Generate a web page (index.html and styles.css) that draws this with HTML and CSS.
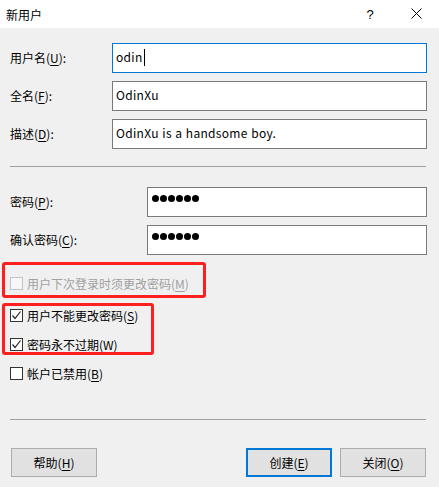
FILE: index.html
```html
<!DOCTYPE html>
<html lang="zh-CN">
<head>
  <meta charset="UTF-8" />
  <title>新用户</title>
  <link rel="stylesheet" href="styles.css">
</head>
<body>
  <div class="titlebar">
    <span class="title">新用户</span>
    <span class="tb-btn help">?</span>
    <span class="tb-btn close">
      <svg width="11" height="11" viewBox="0 0 11 11"><path d="M0.5 0.5 L10.5 10.5 M10.5 0.5 L0.5 10.5" stroke="#000" stroke-width="1" fill="none"/></svg>
    </span>
  </div>

  <div class="dialog">
    <div class="fields">
      <div class="row">
        <label class="lbl">用户名(<u>U</u>):</label>
        <div class="input focused">odin<span class="caret"></span></div>
      </div>
      <div class="row">
        <label class="lbl">全名(<u>F</u>):</label>
        <div class="input">OdinXu</div>
      </div>
      <div class="row">
        <label class="lbl">描述(<u>D</u>):</label>
        <div class="input">OdinXu is a handsome boy.</div>
      </div>
    </div>

    <div class="sep first-sep"></div>

    <div class="fields pw">
      <div class="row">
        <label class="lbl">密码(<u>P</u>):</label>
        <div class="input dots"><i></i><i></i><i></i><i></i><i></i><i></i></div>
      </div>
      <div class="row">
        <label class="lbl">确认密码(<u>C</u>):</label>
        <div class="input dots"><i></i><i></i><i></i><i></i><i></i><i></i></div>
      </div>
    </div>

    <div class="checks">
      <div class="check disabled">
        <span class="box"></span>
        <span>用户下次登录时须更改密码(<u>M</u>)</span>
      </div>
      <div class="check">
        <span class="box"><svg width="11" height="11" viewBox="0 0 11 11"><path d="M1.5 5.5 L4 8.5 L9.5 1.5" stroke="#222" stroke-width="1.2" fill="none"/></svg></span>
        <span>用户不能更改密码(<u>S</u>)</span>
      </div>
      <div class="check">
        <span class="box"><svg width="11" height="11" viewBox="0 0 11 11"><path d="M1.5 5.5 L4 8.5 L9.5 1.5" stroke="#222" stroke-width="1.2" fill="none"/></svg></span>
        <span>密码永不过期(<u>W</u>)</span>
      </div>
      <div class="check">
        <span class="box"></span>
        <span>帐户已禁用(<u>B</u>)</span>
      </div>
    </div>

    <div class="sep last-sep"></div>

    <div class="buttons">
      <button class="btn">帮助(<u>H</u>)</button>
      <span class="spacer"></span>
      <button class="btn default">创建(<u>E</u>)</button>
      <button class="btn">关闭(<u>O</u>)</button>
    </div>
  </div>

  <!-- annotation boxes drawn over the dialog -->
  <div class="mark mark-1"></div>
  <div class="mark mark-2"></div>
</body>
</html>
```

FILE: styles.css
```css
* {
  margin: 0;
  padding: 0;
  box-sizing: border-box;
}

body {
  font-family: "Noto Sans CJK SC", "Noto Sans", sans-serif;
  font-size: 12px;
  color: #000;
  background: #f0f0f0;
  width: 439px;
  height: 487px;
  position: relative;
  overflow: hidden;
}

u {
  text-decoration: underline;
  text-underline-offset: 2px;
}

.titlebar {
  height: 28px;
  background: #fff;
  display: flex;
  align-items: center;
  padding-left: 6px;
}

.title {
  flex: 1;
  font-size: 12px;
}

.tb-btn {
  width: 46px;
  height: 28px;
  display: flex;
  align-items: center;
  justify-content: center;
}

.help {
  font-family: "Liberation Sans", sans-serif;
  font-size: 13px;
}

.close svg {
  margin-top: -2px;
}

.dialog {
  padding: 15px 12px 0 10px;
}

.fields {
  display: flex;
  flex-direction: column;
  gap: 8px;
}

.row {
  display: flex;
  align-items: center;
}

.lbl {
  width: 102px;
  line-height: 16px;
}

.pw .lbl {
  width: 137px;
}

.input {
  flex: 1;
  height: 30px;
  background: #fff;
  border: 1px solid #7a7a7a;
  padding: 4px 3px;
  line-height: 18px;
  font-size: 12px;
  letter-spacing: 0.3px;
  word-spacing: 0.5px;
  display: flex;
  align-items: flex-start;
}

.input.focused {
  border-color: #0078d7;
}

.caret {
  display: inline-block;
  width: 1px;
  height: 17px;
  background: #000;
  margin-left: 1px;
  margin-top: 1px;
}

.dots {
  gap: 1px;
  padding: 7px 4px;
}

.dots i {
  display: block;
  width: 7px;
  height: 7px;
  border-radius: 50%;
  background: #000;
}

.sep {
  height: 1px;
  background: #a0a0a0;
  margin-right: 1px;
}

.first-sep {
  margin-top: 17px;
  margin-bottom: 20px;
}

.pw {
  gap: 8px;
}

.checks {
  margin-top: 22px;
  display: flex;
  flex-direction: column;
  gap: 16px;
}

.check {
  display: flex;
  align-items: center;
  height: 13px;
  line-height: 13px;
  gap: 4px;
}

.check:first-child {
  margin-bottom: 3px;
}

.box {
  width: 13px;
  height: 13px;
  border: 1px solid #333;
  background: #fff;
  display: flex;
  align-items: center;
  justify-content: center;
}

.check.disabled {
  color: #a0a0a0;
}

.check.disabled .box {
  border-color: #c4c4c4;
  background: #f7f7f7;
}

.last-sep {
  margin-top: 39px;
}

.buttons {
  display: flex;
  gap: 8px;
  margin-top: 28px;
  padding-left: 1px;
  margin-right: 1px;
}

.spacer {
  flex: 1;
}

.btn {
  width: 86px;
  height: 29px;
  background: #e1e1e1;
  border: 1px solid #adadad;
  font-family: inherit;
  font-size: 12px;
  color: #000;
}

.btn.default {
  border: 2px solid #0078d7;
}

.mark {
  position: absolute;
  border: 3px solid #ff1f1f;
  border-radius: 3px;
}

.mark-1 {
  left: 2px;
  top: 262px;
  width: 204px;
  height: 36px;
}

.mark-2 {
  left: 2px;
  top: 303px;
  width: 152px;
  height: 52px;
}
```
